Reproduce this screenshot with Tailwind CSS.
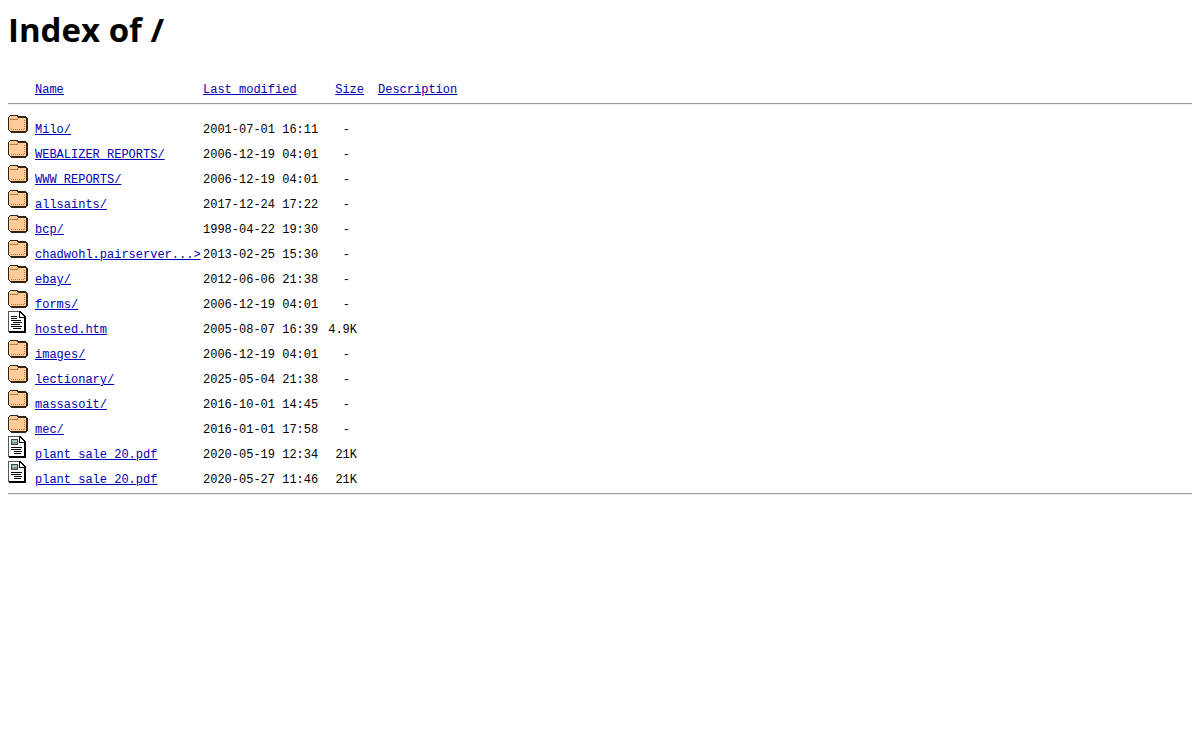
<!DOCTYPE html>
<html lang="en">

<head>
  <meta charset="UTF-8" />
  <meta name="viewport" content="width=device-width, initial-scale=1.0" />
  <script src="https://cdn.jsdelivr.net/npm/@tailwindcss/browser@4"></script>
  <title>Index of /</title>
</head>

<body class="bg-white text-black px-2">

  <!-- Icons -->
  <svg class="hidden">
    <symbol id="icon-folder" viewBox="0 0 20 22">
      <path fill="#332211" d="M2 4h7l2 1h7l1 2 1 1v11l-2 3H3l-3-3V6z" />
      <path fill="#ffcc99" d="M2 5h7v1l1 1h7l1 1v11l-1 1H2l-1-1V6z" />
      <path fill="none" stroke="#b87840" d="M2 8.5h7l1-1" />
      <path fill="none" stroke="#b87840" stroke-dasharray="1 1" d="M3 18.5h14M16.5 9v9" />
    </symbol>
    <symbol id="icon-page" viewBox="0 0 20 22">
      <path fill="#000" d="M0 0h12l6 6v16H1v-1H0z" />
      <path fill="#fff" d="M1 1h10v6h5v13H1z" />
      <path fill="#fff" d="M12 2v4h4z" />
      <path fill="#555" d="M0 0h11v1H1v20H0z" />
    </symbol>
    <symbol id="icon-text" viewBox="0 0 20 22">
      <use href="#icon-page" />
      <path stroke="#000" d="M3 5.5h6M3 7.5h6M3 9.5h10M5 11.5h9M3 13.5h9M3 15.5h11M5 17.5h8" />
    </symbol>
    <symbol id="icon-layout" viewBox="0 0 20 22">
      <use href="#icon-page" />
      <path fill="#444" d="M3 3h7v6H3z" />
      <path fill="#9cc" d="M4 4h5v2H4z" />
      <path fill="#898" d="M4 6h5v2H4z" />
      <path stroke="#000" d="M3 11.5h11M3 13.5h10M6 15.5h8M6 17.5h7" />
    </symbol>
  </svg>

  <h1 class="pt-1 font-['Open_Sans',sans-serif] text-[33px] leading-[52px] font-bold">Index of /</h1>

  <table class="mt-7 w-full table-fixed border-separate border-spacing-0 text-left font-['Liberation_Mono',monospace] text-[12px] leading-[12px]">
    <colgroup>
      <col class="w-[27px]" />
      <col class="w-[168px]" />
      <col class="w-[119px]" />
      <col class="w-[42px]" />
      <col />
    </colgroup>
    <thead>
      <tr>
        <th></th>
        <th class="font-normal"><a class="text-[#0000b4] underline underline-offset-1" href="?C=N;O=D">Name</a></th>
        <th class="font-normal"><a class="text-[#0000b4] underline underline-offset-1" href="?C=M;O=A">Last modified</a></th>
        <th class="text-right font-normal"><a class="text-[#0000b4] underline underline-offset-1" href="?C=S;O=A">Size</a></th>
        <th class="pl-[14px] font-normal"><a class="text-[#0000b4] underline underline-offset-1" href="?C=D;O=A">Description</a></th>
      </tr>
      <tr>
        <td colspan="5" class="pt-[7px] pb-[6px]"><hr class="border-t border-b border-t-[#9a9a9a] border-b-[#eeeeee]" /></td>
      </tr>
    </thead>
    <tbody id="files"></tbody>
  </table>
  <hr class="mt-[7px] border-t border-b border-t-[#9a9a9a] border-b-[#eeeeee]" />

  <script>
    const files = [
      ['folder', 'Milo/', '2001-07-01 16:11', '-'],
      ['folder', 'WEBALIZER REPORTS/', '2006-12-19 04:01', '-'],
      ['folder', 'WWW REPORTS/', '2006-12-19 04:01', '-'],
      ['folder', 'allsaints/', '2017-12-24 17:22', '-'],
      ['folder', 'bcp/', '1998-04-22 19:30', '-'],
      ['folder', 'chadwohl.pairserver...&gt;', '2013-02-25 15:30', '-'],
      ['folder', 'ebay/', '2012-06-06 21:38', '-'],
      ['folder', 'forms/', '2006-12-19 04:01', '-'],
      ['text', 'hosted.htm', '2005-08-07 16:39', '4.9K'],
      ['folder', 'images/', '2006-12-19 04:01', '-'],
      ['folder', 'lectionary/', '2025-05-04 21:38', '-'],
      ['folder', 'massasoit/', '2016-10-01 14:45', '-'],
      ['folder', 'mec/', '2016-01-01 17:58', '-'],
      ['layout', 'plant sale 20.pdf', '2020-05-19 12:34', '21K'],
      ['layout', 'plant sale 20.pdf', '2020-05-27 11:46', '21K'],
    ];

    document.getElementById('files').innerHTML = files.map(([icon, name, date, size]) => `
      <tr class="h-[25px]">
        <td class="align-baseline"><svg class="inline-block h-[22px] w-5 align-baseline" shape-rendering="crispEdges" aria-hidden="true"><use href="#icon-${icon}" /></svg></td>
        <td class="align-baseline whitespace-nowrap"><a class="text-[#0000b4] underline underline-offset-1" href="#">${name}</a></td>
        <td class="align-baseline whitespace-nowrap">${date}</td>
        <td class="align-baseline text-right ${size === '-' ? 'pr-[14px]' : 'pr-[7px]'}">${size}</td>
        <td></td>
      </tr>`).join('');
  </script>

</body>

</html>
